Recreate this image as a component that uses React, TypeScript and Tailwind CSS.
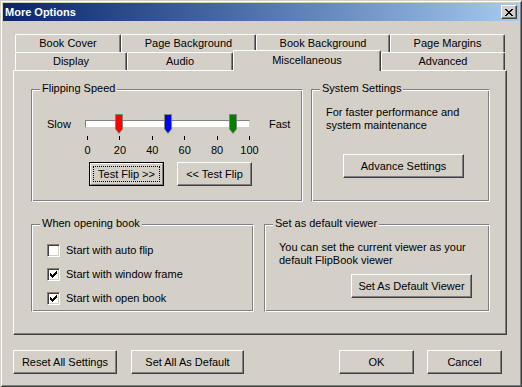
import React from "react";

const raised = "border border-t-white border-l-white border-r-[#404040] border-b-[#404040] shadow-[inset_-1px_-1px_#808080]";

function Button({ label, className = "", isDefault = false }: { label: string; className?: string; isDefault?: boolean }) {
    if (isDefault) {
        return (
            <div className={`border border-black ${className}`}>
                <div className="h-full border border-t-white border-l-white border-r-[#808080] border-b-[#808080] p-[2px]">
                    <div className="h-full flex items-center justify-center border border-dotted border-black">{label}</div>
                </div>
            </div>
        );
    }
    return <div className={`flex items-center justify-center ${raised} ${className}`}>{label}</div>;
}

function GroupBox({ title, className = "", children }: { title: string; className?: string; children?: React.ReactNode }) {
    return (
        <div className={`relative border border-t-[#808080] border-l-[#808080] border-r-white border-b-white shadow-[inset_1px_1px_#fff,inset_-1px_-1px_#808080] ${className}`}>
            <span className="absolute -top-[8px] left-[8px] px-[2px] bg-[#d4d0c8] whitespace-nowrap">{title}</span>
            {children}
        </div>
    );
}

function Checkbox({ checked, label }: { checked: boolean; label: string }) {
    return (
        <div className="flex items-center h-[13px]">
            <div className="w-[13px] h-[13px] bg-white border border-t-[#808080] border-l-[#808080] border-r-white border-b-white shadow-[inset_1px_1px_#404040,inset_-1px_-1px_#d4d0c8] flex items-center justify-center">
                {checked && (
                    <svg width="7" height="7" viewBox="0 0 7 7" shapeRendering="crispEdges">
                        <path d="M6 0h1v3h-1v1h-1v1h-1v1h-1v1h-1v-1h-1v-1h-1v-3h1v1h1v1h1v-1h1v-1h1z" fill="#000" />
                    </svg>
                )}
            </div>
            <span className="ml-[6px]">{label}</span>
        </div>
    );
}

function Thumb({ value, color }: { value: number; color: string }) {
    const center = 2 + value * 1.62;
    return (
        <svg className="absolute -top-[7px]" style={{ left: center - 5 }} width="8" height="20" viewBox="0 0 8 20">
            <path d="M0.5 0.5H7.5V15L4 19.5L0.5 15Z" fill={color} stroke="#808080" />
        </svg>
    );
}

function Tab({ label, w, selected = false }: { label: string; w: string; selected?: boolean }) {
    if (selected) {
        return (
            <div className={`relative z-10 -mt-[2px] h-[21px] ${w} flex items-start justify-center pt-[3px] bg-[#d4d0c8] rounded-t-[2px] border-t border-l border-r border-t-white border-l-white border-r-[#404040] shadow-[inset_-1px_0_#808080]`}>
                {label}
            </div>
        );
    }
    return (
        <div className={`h-[18px] ${w} flex items-center justify-center rounded-t-[2px] border-t border-l border-r border-t-white border-l-white border-r-[#404040] shadow-[inset_-1px_0_#808080]`}>
            {label}
        </div>
    );
}

export default function App() {
    return (
        <div className="w-[522px] h-[387px] overflow-hidden bg-[#d4d0c8] p-[3px] text-[11px] leading-[13px] text-black font-['Liberation_Sans',Arial,sans-serif] shadow-[inset_1px_1px_#d4d0c8,inset_-1px_-1px_#404040,inset_2px_2px_#fff,inset_-2px_-2px_#808080]">
            {/* title bar */}
            <div className="h-[18px] flex items-center justify-between pl-[2px] pr-[2px] bg-linear-to-r from-[#0a246a] to-[#a6caf0]">
                <span className="font-bold text-white">More Options</span>
                <div className={`w-[16px] h-[14px] bg-[#d4d0c8] flex items-center justify-center ${raised}`}>
                    <svg width="8" height="7" viewBox="0 0 8 7" shapeRendering="crispEdges">
                        <path d="M0 0h2v1h1v1h2v-1h1v-1h2v1h-1v1h-1v1h-1v1h1v1h1v1h1v1h-2v-1h-1v-1h-2v1h-1v1h-2v-1h1v-1h1v-1h1v-1h-1v-1h-1v-1h-1z" fill="#000" />
                    </svg>
                </div>
            </div>

            {/* tabs */}
            <div className="mt-[13px] ml-[10px] w-[494px]">
                <div className="flex pl-[2px]">
                    <Tab label="Book Cover" w="w-[106px]" />
                    <Tab label="Page Background" w="w-[135px]" />
                    <Tab label="Book Background" w="w-[134px]" />
                    <Tab label="Page Margins" w="w-[115px]" />
                </div>
                <div className="flex items-start h-[18px] pl-[2px]">
                    <Tab label="Display" w="w-[112px]" />
                    <Tab label="Audio" w="w-[106px]" />
                    <Tab label="Miscellaneous" w="w-[148px]" selected />
                    <Tab label="Advanced" w="w-[124px]" />
                </div>

                {/* panel */}
                <div className={`h-[265px] pl-[17px] pt-[18px] ${raised}`}>
                    <div className="flex">
                        <GroupBox title="Flipping Speed" className="w-[272px] h-[113px]">
                            <div className="flex items-center h-[14px] mt-[27px]">
                                <span className="ml-[15px] w-[38px]">Slow</span>
                                <div className="relative w-[165px] h-[8px] bg-white border border-t-[#808080] border-l-[#808080] border-r-[#d4d0c8] border-b-[#d4d0c8]">
                                    <Thumb value={20} color="#ff0000" />
                                    <Thumb value={50} color="#0000ff" />
                                    <Thumb value={90} color="#008000" />
                                </div>
                                <span className="ml-[19px]">Fast</span>
                            </div>
                            <div className="mt-[5px] ml-[53px] w-[165px] flex justify-between pl-[2px]">
                                {["0", "20", "40", "60", "80", "100"].map((t) => (
                                    <div key={t} className="w-px flex flex-col items-center">
                                        <div className="w-px h-[4px] bg-black" />
                                        <span className="mt-[4px] whitespace-nowrap">{t}</span>
                                    </div>
                                ))}
                            </div>
                            <div className="flex mt-[5px] ml-[57px]">
                                <Button label="Test Flip >>" isDefault className="w-[75px] h-[24px]" />
                                <Button label="<< Test Flip" className="ml-[13px] w-[75px] h-[24px]" />
                            </div>
                        </GroupBox>

                        <GroupBox title="System Settings" className="ml-[8px] w-[179px] h-[113px]">
                            <p className="mt-[16px] pl-[14px]">For faster performance and<br />system maintenance</p>
                            <Button label="Advance Settings" className="mt-[22px] ml-[31px] w-[121px] h-[24px]" />
                        </GroupBox>
                    </div>

                    <div className="flex mt-[22px]">
                        <GroupBox title="When opening book" className="w-[223px] h-[88px]">
                            <div className="mt-[19px] pl-[15px] flex flex-col gap-[11px]">
                                <Checkbox checked={false} label="Start with auto flip" />
                                <Checkbox checked label="Start with window frame" />
                                <Checkbox checked label="Start with open book" />
                            </div>
                        </GroupBox>

                        <GroupBox title="Set as default viewer" className="ml-[10px] w-[226px] h-[88px]">
                            <p className="mt-[16px] pl-[14px]">You can set the current viewer as your<br />default FlipBook viewer</p>
                            <Button label="Set As Default Viewer" className="mt-[7px] ml-[86px] w-[121px] h-[24px]" />
                        </GroupBox>
                    </div>
                </div>
            </div>

            {/* bottom buttons */}
            <div className="flex mt-[15px] ml-[10px]">
                <Button label="Reset All Settings" className="w-[104px] h-[24px]" />
                <Button label="Set All As Default" className="ml-[14px] w-[113px] h-[24px]" />
                <Button label="OK" className="ml-[95px] w-[75px] h-[24px]" />
                <Button label="Cancel" className="ml-[13px] w-[75px] h-[24px]" />
            </div>
        </div>
    );
}
